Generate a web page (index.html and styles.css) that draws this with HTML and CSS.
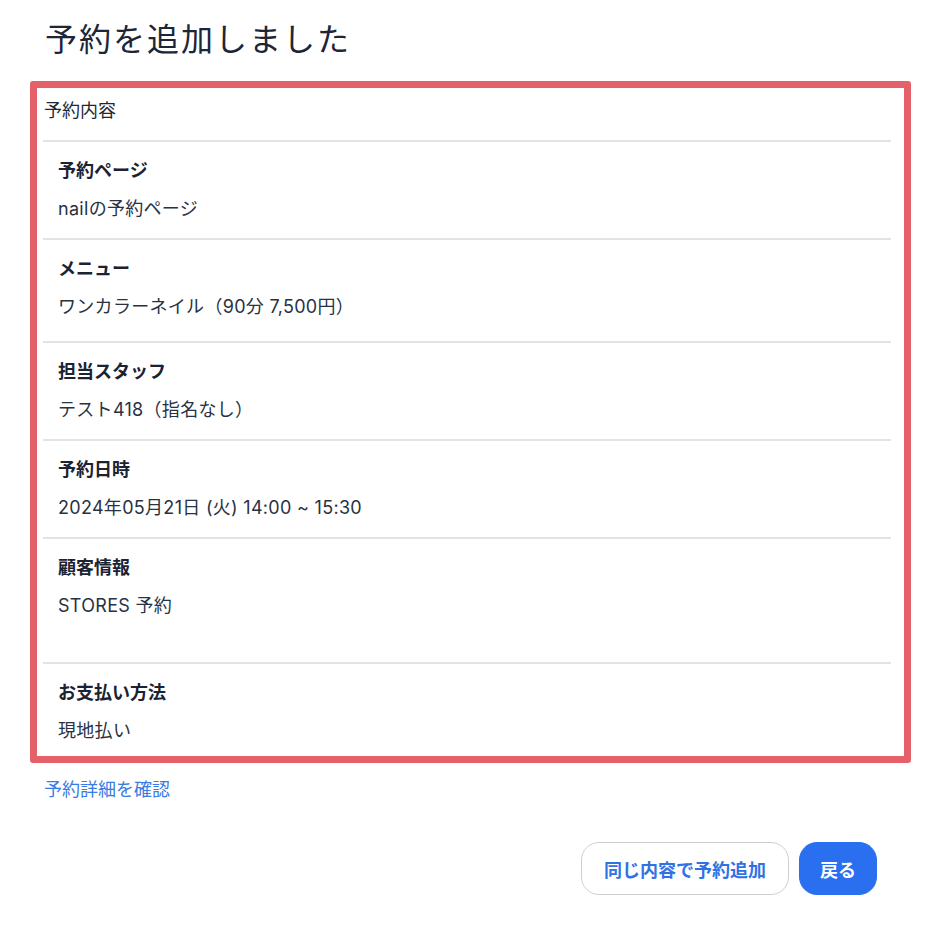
FILE: index.html
```html
<!DOCTYPE html>
<html lang="ja">
<head>
<meta charset="utf-8">
<title>予約を追加しました</title>
<link rel="stylesheet" href="styles.css">
</head>
<body>
<main class="page">
  <h1 class="title">予約を追加しました</h1>
  <section class="frame">
    <div class="frame-head">予約内容</div>
    <ul class="detail-list">
      <li class="detail">
        <div class="detail-label">予約ページ</div>
        <div class="detail-value">nailの予約ページ</div>
      </li>
      <li class="detail detail--menu">
        <div class="detail-label">メニュー</div>
        <div class="detail-value">ワンカラーネイル（90分 7,500円）</div>
      </li>
      <li class="detail">
        <div class="detail-label">担当スタッフ</div>
        <div class="detail-value">テスト418（指名なし）</div>
      </li>
      <li class="detail">
        <div class="detail-label">予約日時</div>
        <div class="detail-value">2024年05月21日 (火) 14:00 ~ 15:30</div>
      </li>
      <li class="detail detail--customer">
        <div class="detail-label">顧客情報</div>
        <div class="detail-value">STORES 予約</div>
      </li>
      <li class="detail detail--last">
        <div class="detail-label">お支払い方法</div>
        <div class="detail-value">現地払い</div>
      </li>
    </ul>
  </section>
  <a class="detail-link" href="#">予約詳細を確認</a>
  <div class="actions">
    <button class="btn btn--outline" type="button">同じ内容で予約追加</button>
    <button class="btn btn--primary" type="button">戻る</button>
  </div>
</main>
</body>
</html>
```

FILE: styles.css
```css
* { box-sizing: border-box; }

html, body {
  margin: 0;
  padding: 0;
  background: #ffffff;
}

body {
  font-family: "Inter", "Noto Sans CJK JP", sans-serif;
  color: #1d2636;
}

.page {
  display: flex;
  flex-direction: column;
  padding: 0 25px 0 30px;
}

.title {
  margin: 16px 0 17px 15px;
  font-size: 32px;
  line-height: 48px;
  font-weight: 400;
  letter-spacing: 2px;
  color: #1d2636;
}

.frame {
  border: 7px solid #e5616a;
  border-radius: 3px;
  padding: 0 13px 0 6px;
}

.frame-head {
  padding: 11px 0 17px 1px;
  font-size: 18px;
  line-height: 24px;
  color: #1f2737;
}

.detail-list {
  list-style: none;
  margin: 0;
  padding: 0;
}

.detail {
  border-top: 2px solid #e3e4e1;
  padding: 17px 0 17px 15px;
  display: flex;
  flex-direction: column;
  gap: 14px;
}

.detail--menu { padding-bottom: 22px; }
.detail--customer { padding-bottom: 44px; }
.detail--last { padding-bottom: 13px; }

.detail-label {
  font-size: 18px;
  line-height: 24px;
  font-weight: 700;
  color: #1b2333;
}

.detail-value {
  font-size: 18px;
  line-height: 24px;
  font-weight: 400;
  letter-spacing: 0.3px;
  color: #283242;
}

.detail-link {
  align-self: flex-start;
  margin: 15px 0 0 14px;
  font-size: 18px;
  line-height: 24px;
  color: #3a7be2;
  text-decoration: none;
}

.actions {
  display: flex;
  justify-content: flex-end;
  gap: 10px;
  margin: 40px 34px 0 0;
}

.btn {
  height: 53px;
  padding: 0 20px;
  font-family: inherit;
  font-size: 18px;
  font-weight: 700;
  border-radius: 18px;
  cursor: pointer;
}

.btn--outline {
  padding: 0 22px;
  background: #ffffff;
  border: 1.5px solid #cfd0cb;
  color: #2e72e6;
}

.btn--primary {
  background: #2a6ff0;
  border: 1.5px solid #2a6ff0;
  color: #ffffff;
}
```
